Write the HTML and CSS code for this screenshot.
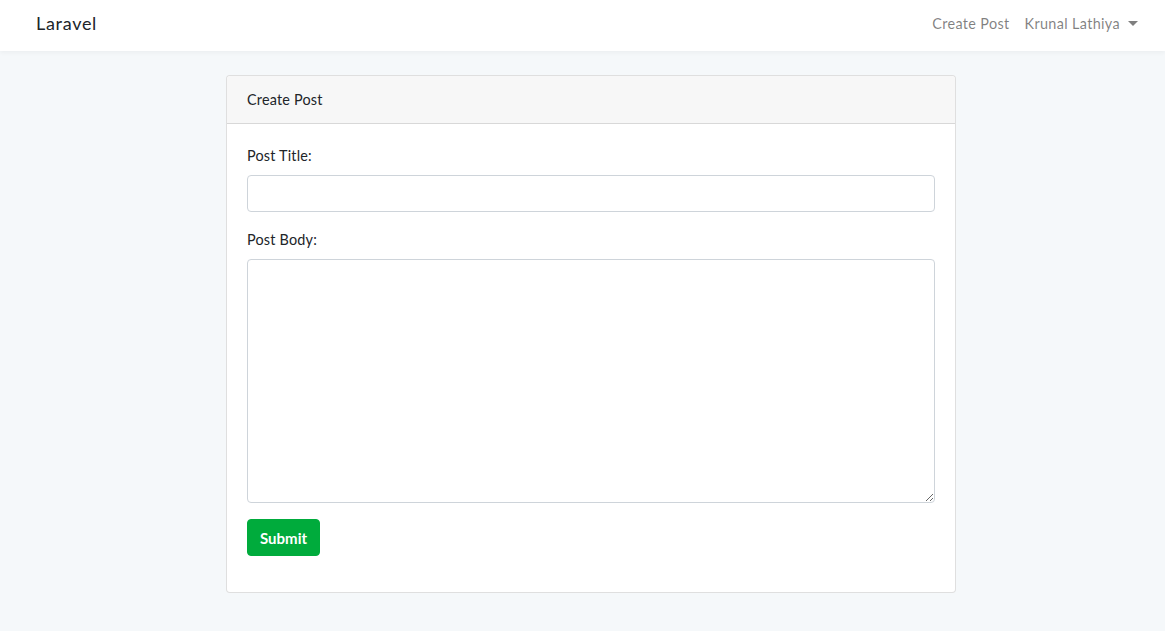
FILE: index.html
```html
<!DOCTYPE html>
<html lang="en">
<head>
<meta charset="utf-8">
<title>Laravel</title>
<link rel="stylesheet" href="styles.css">
</head>
<body>
<nav class="navbar">
  <a class="brand" href="#">Laravel</a>
  <ul class="nav-links">
    <li><a href="#">Create Post</a></li>
    <li><a href="#" class="dropdown">Krunal Lathiya <span class="caret"></span></a></li>
  </ul>
</nav>
<main class="main">
  <div class="card">
    <div class="card-header">Create Post</div>
    <div class="card-body">
      <form>
        <div class="form-group">
          <label class="label">Post Title:</label>
          <input type="text" class="input">
        </div>
        <div class="form-group">
          <label class="label">Post Body:</label>
          <textarea class="input textarea"></textarea>
        </div>
        <button type="button" class="btn">Submit</button>
      </form>
    </div>
  </div>
</main>
</body>
</html>
```
FILE: styles.css
```css
* { box-sizing: border-box; }
html, body { margin: 0; padding: 0; }
body {
  background: #f5f8fa;
  font-family: "Lato", "Open Sans", sans-serif;
  font-size: 14.4px;
  line-height: 1.6;
  letter-spacing: 0.2px;
  color: #212529;
  height: 631px;
  overflow: hidden;
}
a { text-decoration: none; }
.navbar {
  height: 51px;
  background: #fff;
  box-shadow: 0 2px 4px rgba(0,0,0,.04);
  display: flex;
  align-items: center;
  justify-content: space-between;
  padding: 0 27px 3px 36px;
}
.brand {
  color: #212529;
  font-size: 18px;
  letter-spacing: 0.7px;
  line-height: 1;
  margin-bottom: 2px;
}
.nav-links {
  list-style: none;
  margin: 0;
  padding: 0;
  display: flex;
  gap: 15px;
}
.nav-links a {
  color: rgba(0,0,0,.5);
  font-size: 14.4px;
  letter-spacing: 0.35px;
  display: flex;
  align-items: center;
}
.caret {
  display: inline-block;
  margin-left: 8px;
  width: 0;
  height: 0;
  border-top: 5px solid rgba(0,0,0,.5);
  border-left: 5px solid transparent;
  border-right: 5px solid transparent;
}
.main {
  padding-top: 24px;
}
.card {
  width: 730px;
  margin-left: 226px;
  background: #fff;
  border: 1px solid rgba(0,0,0,.125);
  border-radius: 4px;
}
.card-header {
  height: 48px;
  display: flex;
  align-items: center;
  padding: 0 20px;
  background: #f7f7f7;
  border-bottom: 1px solid rgba(0,0,0,.125);
  border-radius: 4px 4px 0 0;
}
.card-body {
  padding: 20px 20px 36px;
}
.form-group {
  margin-bottom: 16px;
  display: flex;
  flex-direction: column;
}
.label {
  display: block;
  margin: 0 0 8px;
  line-height: 23px;
}
.input {
  display: block;
  width: 100%;
  height: 37px;
  border: 1px solid #ced4da;
  border-radius: 4px;
  background: #fff;
  font: inherit;
  padding: 6px 12px;
}
.textarea {
  height: 244px;
  resize: vertical;
}
.btn {
  display: block;
  margin-top: 0;
  height: 37px;
  padding: 0 12px;
  background: #00ab3c;
  border: 1px solid #00ab3c;
  border-radius: 4px;
  color: #fff;
  font-family: inherit;
  font-size: 15px;
  font-weight: 700;
}
```
